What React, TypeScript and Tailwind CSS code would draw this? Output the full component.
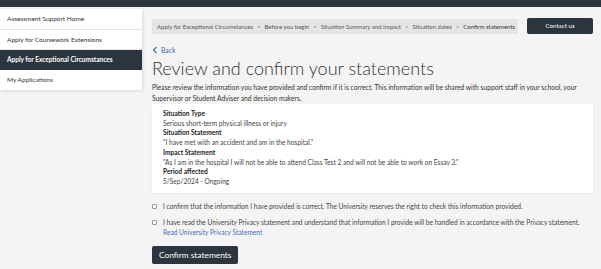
import React from 'react';

const navItems = [
  { label: 'Assessment Support Home', active: false },
  { label: 'Apply for Coursework Extensions', active: false },
  { label: 'Apply for Exceptional Circumstances', active: true },
  { label: 'My Applications', active: false },
];

const crumbs = [
  'Apply for Exceptional Circumstances',
  'Before you begin',
  'Situation Summary and Impact',
  'Situation dates',
];

const details = [
  { title: 'Situation Type', value: 'Serious short-term physical illness or injury' },
  { title: 'Situation Statement', value: '"I have met with an accident and am in the hospital."' },
  {
    title: 'Impact Statement',
    value: '"As I am in the hospital I will not be able to attend Class Test 2 and will not be able to work on Essay 3."',
  },
  { title: 'Period affected', value: '5/Sep/2024 - Ongoing' },
];

export default function App() {
  return (
    <div
      className="w-[601px] h-[269px] overflow-hidden bg-[#f4f4f4] text-[#333]"
      style={{ fontFamily: 'Lato, "Open Sans", sans-serif' }}
    >
      {/* Top bar */}
      <div className="h-[7px] bg-[#2c353d]" />

      <div className="flex">
        {/* Sidebar */}
        <nav className="w-[142px] shrink-0 mt-[2px] self-start bg-white shadow-[1px_1px_3px_rgba(0,0,0,0.12)]">
          {navItems.map((item, i) => (
            <div
              key={item.label}
              className={`${i === 0 ? 'h-[21px]' : 'h-[20px]'} flex items-center px-[7px] text-[6.5px] ${
                item.active
                  ? 'bg-[#2c353d] text-white font-bold'
                  : 'text-[#333]'
              } ${i < navItems.length - 1 && !item.active ? 'border-b border-[#e3e3e3]' : ''}`}
            >
              {item.label}
            </div>
          ))}
        </nav>

        {/* Main */}
        <main className="flex-1 min-w-0 pl-[10px] pr-[8px] pt-[11px]">
          <div className="flex items-center gap-[9px]">
            <div className="flex-1 min-w-0 h-[15px] bg-[#e5e5e5] flex items-center px-[5px] text-[6px] text-[#555] whitespace-nowrap overflow-hidden">
              {crumbs.map((c) => (
                <span key={c} className="flex items-center">
                  {c}
                  <span className="mx-[4px] text-[#777]">&gt;</span>
                </span>
              ))}
              <span className="text-[#333]">Confirm statements</span>
            </div>
            <button className="w-[66px] h-[16px] shrink-0 bg-[#2c353d] text-white text-[6.2px] rounded-[2px]">
              Contact us
            </button>
          </div>

          <div className="mt-[11px] h-[10px] flex items-center gap-[3px] text-[#3a6fb0] text-[6.8px]">
            <svg width="6" height="8" viewBox="0 0 6 8" fill="none">
              <path d="M4.5 1L1.5 4l3 3" stroke="#3a6fb0" strokeWidth="1.2" />
            </svg>
            <span>Back</span>
          </div>

          <h1 className="mt-[2px] text-[18px] leading-[22px] font-light text-[#333]">
            Review and confirm your statements
          </h1>

          <p className="mt-[3px] text-[6.7px] leading-[10.5px] text-[#333]">
            Please review the information you have provided and confirm if it is correct. This information will be shared with support staff in your school, your Supervisor or Student Adviser and decision makers.
          </p>

          <div className="mt-[1px] bg-white px-[11px] pt-[5px] pb-[6px] text-[6.6px] leading-[9.7px] shadow-[0_1px_2px_rgba(0,0,0,0.06)]">
            {details.map((d) => (
              <div key={d.title}>
                <div className="font-bold text-[#222]">{d.title}</div>
                <div className="text-[#444]">{d.value}</div>
              </div>
            ))}
          </div>

          <div className="mt-[9px] flex items-start gap-[6px] text-[6.6px] leading-[9.5px] text-[#444]">
            <span className="mt-[2px] w-[5px] h-[5px] border border-[#999] rounded-[1px] bg-white shrink-0" />
            <span>
              I confirm that the information I have provided is correct. The University reserves the right to check this information provided.
            </span>
          </div>

          <div className="mt-[7px] flex items-start gap-[6px] text-[6.6px] leading-[9.5px] text-[#444]">
            <span className="mt-[2px] w-[5px] h-[5px] border border-[#999] rounded-[1px] bg-white shrink-0" />
            <div>
              <div>
                I have read the University Privacy statement and understand that information I provide will be handled in accordance with the Privacy statement.
              </div>
              <div className="text-[#4a6fb5]">Read University Privacy Statement</div>
            </div>
          </div>

          <button className="mt-[9px] h-[18px] px-[7px] bg-[#2c353d] text-white text-[8.4px] rounded-[2px]">
            Confirm statements
          </button>
        </main>
      </div>
    </div>
  );
}
